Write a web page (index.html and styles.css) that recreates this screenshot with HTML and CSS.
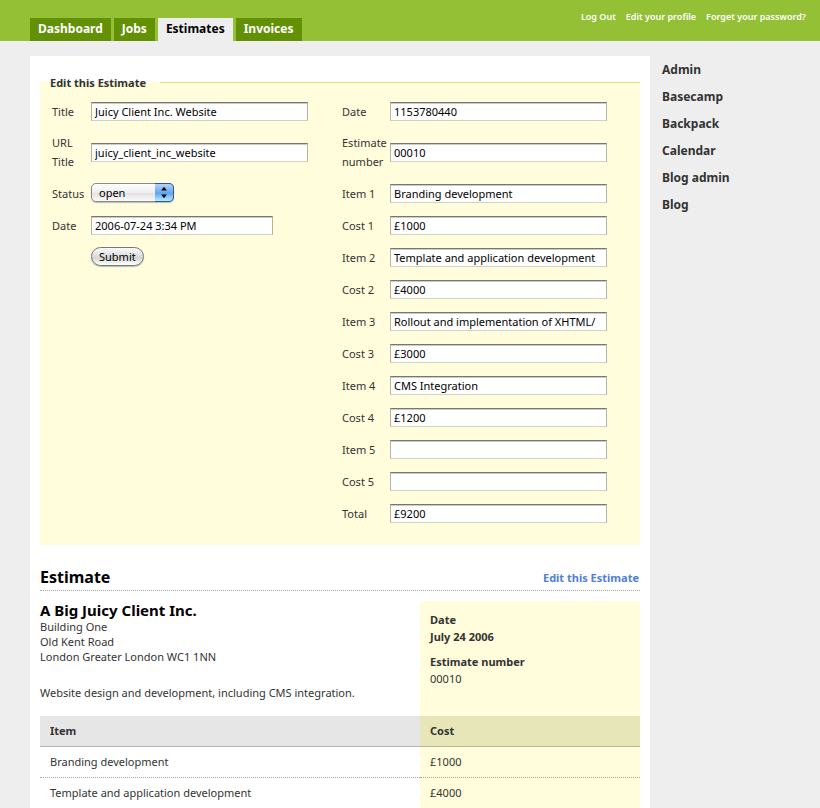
FILE: index.html
```html
<!DOCTYPE html>
<html lang="en">
<head>
    <meta charset="UTF-8">
    <meta name="viewport" content="width=device-width, initial-scale=1.0">
    <title>Estimates</title>
    <link rel="stylesheet" href="styles.css">
</head>
<body>
    <header class="header">
        <nav class="tabs">
            <a href="#">Dashboard</a>
            <a href="#">Jobs</a>
            <a href="#" class="active">Estimates</a>
            <a href="#">Invoices</a>
        </nav>
        <nav class="account">
            <a href="#">Log Out</a>
            <a href="#">Edit your profile</a>
            <a href="#">Forget your password?</a>
        </nav>
    </header>

    <div class="page">
        <main class="content">
            <form>
                <fieldset class="edit">
                    <legend>Edit this Estimate</legend>
                    <div class="columns">
                        <div class="column">
                            <div class="row">
                                <label for="title">Title</label>
                                <input type="text" id="title" value="Juicy Client Inc. Website">
                            </div>
                            <div class="row">
                                <label for="urlTitle">URL Title</label>
                                <input type="text" id="urlTitle" value="juicy_client_inc_website">
                            </div>
                            <div class="row compact">
                                <label for="status">Status</label>
                                <div class="select">
                                    <select id="status">
                                        <option>open</option>
                                        <option>closed</option>
                                    </select>
                                    <svg class="arrows" viewBox="0 0 18 18" aria-hidden="true">
                                        <path d="M9 3l3 4H6zM9 15l-3-4h6z"/>
                                    </svg>
                                </div>
                            </div>
                            <div class="row compact">
                                <label for="entryDate">Date</label>
                                <input type="text" id="entryDate" class="short" value="2006-07-24 3:34 PM">
                            </div>
                            <div class="row compact">
                                <button type="submit">Submit</button>
                            </div>
                        </div>

                        <div class="column wide">
                            <div class="row">
                                <label for="date">Date</label>
                                <input type="text" id="date" value="1153780440">
                            </div>
                            <div class="row">
                                <label for="number">Estimate number</label>
                                <input type="text" id="number" value="00010">
                            </div>
                            <div class="row">
                                <label for="item1">Item 1</label>
                                <input type="text" id="item1" value="Branding development">
                            </div>
                            <div class="row">
                                <label for="cost1">Cost 1</label>
                                <input type="text" id="cost1" value="£1000">
                            </div>
                            <div class="row">
                                <label for="item2">Item 2</label>
                                <input type="text" id="item2" value="Template and application development">
                            </div>
                            <div class="row">
                                <label for="cost2">Cost 2</label>
                                <input type="text" id="cost2" value="£4000">
                            </div>
                            <div class="row">
                                <label for="item3">Item 3</label>
                                <input type="text" id="item3" value="Rollout and implementation of XHTML/">
                            </div>
                            <div class="row">
                                <label for="cost3">Cost 3</label>
                                <input type="text" id="cost3" value="£3000">
                            </div>
                            <div class="row">
                                <label for="item4">Item 4</label>
                                <input type="text" id="item4" value="CMS Integration">
                            </div>
                            <div class="row">
                                <label for="cost4">Cost 4</label>
                                <input type="text" id="cost4" value="£1200">
                            </div>
                            <div class="row">
                                <label for="item5">Item 5</label>
                                <input type="text" id="item5">
                            </div>
                            <div class="row">
                                <label for="cost5">Cost 5</label>
                                <input type="text" id="cost5">
                            </div>
                            <div class="row">
                                <label for="total">Total</label>
                                <input type="text" id="total" value="£9200">
                            </div>
                        </div>
                    </div>
                </fieldset>
            </form>

            <div class="heading">
                <h1>Estimate</h1>
                <a href="#">Edit this Estimate</a>
            </div>

            <div class="summary">
                <div class="client">
                    <h2>A Big Juicy Client Inc.</h2>
                    <address>
                        Building One<br>
                        Old Kent Road<br>
                        London Greater London WC1 1NN
                    </address>
                    <p>Website design and development, including CMS integration.</p>
                </div>
                <dl class="details">
                    <dt>Date</dt>
                    <dd><strong>July 24 2006</strong></dd>
                    <dt>Estimate number</dt>
                    <dd>00010</dd>
                </dl>
            </div>

            <table class="items">
                <thead>
                    <tr><th>Item</th><th class="cost">Cost</th></tr>
                </thead>
                <tbody>
                    <tr><td>Branding development</td><td class="cost">£1000</td></tr>
                    <tr><td>Template and application development</td><td class="cost">£4000</td></tr>
                </tbody>
            </table>
        </main>

        <nav class="sidebar">
            <a href="#">Admin</a>
            <a href="#">Basecamp</a>
            <a href="#">Backpack</a>
            <a href="#">Calendar</a>
            <a href="#">Blog admin</a>
            <a href="#">Blog</a>
        </nav>
    </div>
</body>
</html>
```

FILE: styles.css
```css
* {
    box-sizing: border-box;
}
body {
    display: flex;
    flex-direction: column;
    min-height: 100vh;
    margin: 0;
    background: #eee;
    color: #333;
    font-family: "Lucida Grande", "Noto Sans", sans-serif;
    font-size: 11px;
    line-height: 15px;
}
a {
    text-decoration: none;
}

/* header */
.header {
    display: flex;
    justify-content: space-between;
    background: #94c035;
    padding: 0 14px 0 30px;
}
.tabs {
    display: flex;
    gap: 3px;
    padding-top: 18px;
}
.tabs a {
    padding: 0 8px 2px;
    background: #629106;
    color: #fff;
    font-size: 12px;
    font-weight: bold;
    line-height: 21px;
}
.tabs a.active {
    background: #eee;
    color: #000;
}
.account {
    display: flex;
    gap: 10px;
    padding-top: 9px;
}
.account a {
    color: #fff;
    font-size: 9px;
    font-weight: 600;
}

/* layout */
.page {
    display: flex;
    flex: 1;
    padding: 15px 0 0 30px;
}
.content {
    flex: 1;
    min-width: 0;
    padding: 17px 10px 0;
    background: #fff;
}
.sidebar {
    display: flex;
    flex-direction: column;
    width: 170px;
    padding-left: 12px;
}
.sidebar a {
    color: #333;
    font-size: 12px;
    font-weight: bold;
    line-height: 27px;
}

/* edit form */
.edit {
    margin: 0;
    padding: 3px 8px 16px 12px;
    border: 0;
    border-top: 1px solid #e6dc7c;
    background: #fffddb;
}
.edit legend {
    margin-left: -12px;
    padding: 0 14px 0 10px;
    font-weight: bold;
    line-height: 19px;
}
.columns {
    display: grid;
    grid-template-columns: 1fr 1fr;
}
.row {
    display: grid;
    grid-template-columns: 39px 1fr;
    align-items: center;
    justify-items: start;
    min-height: 32px;
    padding: 6px 0;
}
.row.compact {
    min-height: 31px;
}
.wide .row {
    grid-template-columns: 48px 1fr;
}
.row label {
    line-height: 19px;
}
.row input {
    width: 217px;
    max-width: 100%;
    height: 19px;
    padding: 0 3px;
    border: 1px solid #b4b4a6;
    border-top-color: #77776f;
    border-bottom-color: #d2d2c4;
    background: #fff;
    box-shadow: inset 0 1px 0 #ccc;
    color: #000;
    font: inherit;
}
.row input.short {
    width: 182px;
}
.row button {
    grid-column: 2;
    height: 19px;
    padding: 0 7px;
    border: 1px solid #777;
    border-radius: 10px;
    background: linear-gradient(#fafafa, #dcdcdc 50%, #cfcfcf 51%, #fff);
    box-shadow: 0 1px 1px #bbb;
    color: #000;
    font: inherit;
    line-height: 15px;
}
.select {
    position: relative;
    width: 83px;
    height: 19px;
    margin-bottom: 2px;
}
.select select {
    appearance: none;
    width: 100%;
    height: 100%;
    padding: 0 24px 0 7px;
    border: 1px solid #888;
    border-radius: 5px;
    background: linear-gradient(#fff, #eee 50%, #e0e0e0 51%, #fafafa);
    box-shadow: 0 1px 1px #bbb;
    color: #000;
    font: inherit;
}
.arrows {
    position: absolute;
    top: 0;
    right: 0;
    width: 19px;
    height: 19px;
    border: 1px solid #3a5795;
    border-left: 0;
    border-radius: 0 5px 5px 0;
    background: linear-gradient(#b4d4f8, #6aa9ee 50%, #58a0ee 51%, #b4eeff);
    pointer-events: none;
}

/* estimate */
.heading {
    display: flex;
    align-items: center;
    justify-content: space-between;
    margin-top: 20px;
    padding: 0 1px 0 0;
    border-bottom: 1px dotted #aaa;
}
.heading h1 {
    margin: 0;
    color: #000;
    font-size: 16px;
    line-height: 25px;
}
.heading a {
    color: #5080dc;
    font-weight: bold;
}
.summary {
    display: grid;
    grid-template-columns: 1fr 220px;
    margin-top: 10px;
}
.client h2 {
    margin: 0;
    color: #000;
    font-size: 15px;
    line-height: 18px;
}
.client address {
    font-style: normal;
}
.client p {
    margin: 21px 0 16px;
}
.details {
    margin: 0;
    padding: 10px 10px 0;
    background: #fffddb;
    line-height: 17px;
}
.details dt {
    font-weight: bold;
}
.details dd {
    margin: 0 0 8px;
}
.items {
    width: 100%;
    border-collapse: separate;
    border-spacing: 0;
}
.items th,
.items td {
    height: 31px;
    padding: 0 10px 2px;
    border-bottom: 1px dotted #aaa;
    text-align: left;
}
.items th {
    border-bottom: 1px solid #b4b4b4;
    background: #e6e6e6;
}
.items .cost {
    width: 220px;
    background: #fffddb;
}
.items th.cost {
    border-bottom-color: #b4b496;
    background: #e6e6b8;
}
.items tbody tr:last-child td {
    height: 30px;
    border-bottom: 0;
}
```
